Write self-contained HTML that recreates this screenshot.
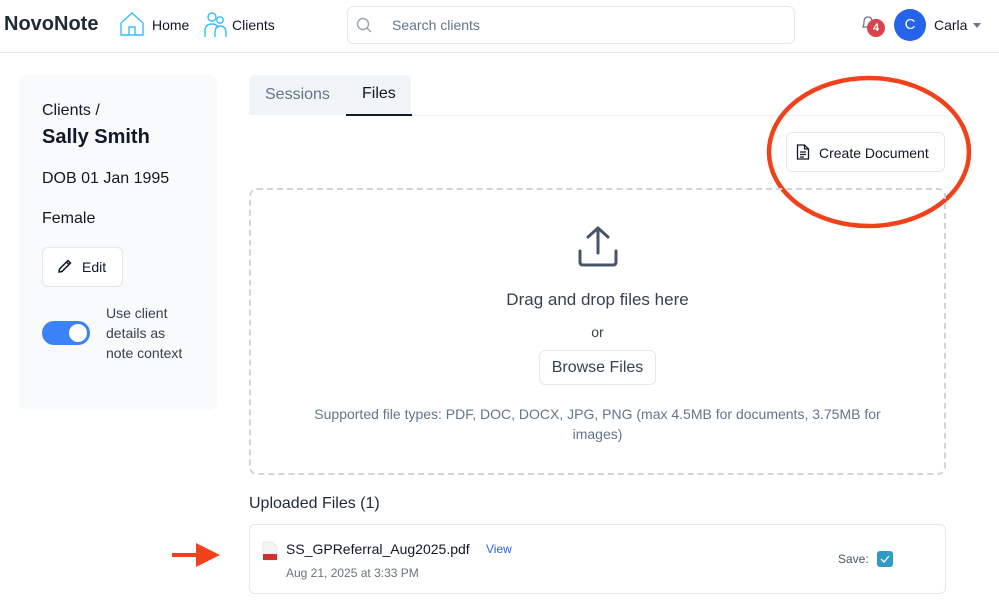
<!DOCTYPE html>
<html><head><style>
*{box-sizing:border-box;margin:0;padding:0}
body{width:999px;height:610px;background:#fff;font-family:"Liberation Sans",sans-serif;position:relative;overflow:hidden;color:#111827}
.a{position:absolute;white-space:nowrap}
</style></head><body>
<div class="a" style="left:4px;top:13px;font-size:20px;font-weight:bold;color:#1f2937">NovoNote</div>
<svg class="a" style="left:119px;top:11px" width="26" height="26" viewBox="0 0 26 26" fill="none" stroke="#38bdf8" stroke-width="1.4"><path d="M2 12 L13 2 L24 12 V24 H2 Z"/><path d="M10 24 V16 H16 V24"/></svg>
<div class="a" style="left:152px;top:17px;font-size:14px">Home</div>
<svg class="a" style="left:204px;top:12px" width="24" height="26" viewBox="0 0 24 26" fill="none" stroke="#38bdf8" stroke-width="1.4"><circle cx="8" cy="5" r="4"/><circle cx="16" cy="8" r="3.2"/><path d="M1 25 V19 Q1 12 8 12 Q13 12 14 16"/><path d="M11 25 V21 Q11 14 16 14 Q22 14 22 21 V25"/></svg>
<div class="a" style="left:232px;top:17px;font-size:14px">Clients</div>
<div class="a" style="left:347px;top:6px;width:448px;height:38px;border:1px solid #e5e7eb;border-radius:6px"></div>
<svg class="a" style="left:356px;top:17px" width="16" height="16" viewBox="0 0 16 16" fill="none" stroke="#9ca3af" stroke-width="1.4"><circle cx="7" cy="7" r="5.5"/><path d="M11 11 L15 15"/></svg>
<div class="a" style="left:392px;top:17px;font-size:14px;color:#64748b">Search clients</div>
<svg class="a" style="left:861px;top:15px" width="14" height="16" viewBox="0 0 14 16" fill="none" stroke="#6b7280" stroke-width="1.2"><path d="M2 12 Q3 10 3 7 Q3 2 7 2 Q11 2 11 7 Q11 10 12 12 Z"/></svg>
<div class="a" style="left:867px;top:19px;width:18px;height:18px;border-radius:50%;background:#d9434f;color:#fff;font-size:11px;font-weight:bold;text-align:center;line-height:18px">4</div>
<div class="a" style="left:894px;top:9px;width:32px;height:32px;border-radius:50%;background:#2563eb;color:#fff;font-size:15px;text-align:center;line-height:32px">C</div>
<div class="a" style="left:934px;top:17px;font-size:14px">Carla</div>
<div class="a" style="left:973px;top:23px;width:0;height:0;border-left:4px solid transparent;border-right:4px solid transparent;border-top:5px solid #6b7280"></div>
<div class="a" style="left:0;top:52px;width:999px;height:1px;background:#e5e7eb"></div>

<div class="a" style="left:18px;top:75px;width:199px;height:335px;background:#f8fafc;border-radius:8px"></div>
<div class="a" style="left:42px;top:102px;font-size:16px">Clients /</div>
<div class="a" style="left:42px;top:126px;font-size:20px;font-weight:bold">Sally Smith</div>
<div class="a" style="left:42px;top:170px;font-size:16px">DOB 01 Jan 1995</div>
<div class="a" style="left:42px;top:210px;font-size:16px">Female</div>
<div class="a" style="left:42px;top:247px;width:81px;height:40px;border:1px solid #e5e7eb;border-radius:6px;background:#fff"></div>
<svg class="a" style="left:57px;top:258px" width="16" height="16" viewBox="0 0 16 16" fill="none" stroke="#111827" stroke-width="1.5"><path d="M2 14 L2.5 11 L11 2.5 L13.5 5 L5 13.5 Z M9.5 4 L12 6.5"/></svg>
<div class="a" style="left:82px;top:259px;font-size:14px">Edit</div>
<div class="a" style="left:42px;top:321px;width:48px;height:24px;border-radius:12px;background:#3b82f6"></div>
<div class="a" style="left:69px;top:324px;width:18px;height:18px;border-radius:50%;background:#fff"></div>
<div class="a" style="left:106px;top:303px;font-size:14px;line-height:20px;color:#374151">Use client<br>details as<br>note context</div>

<div class="a" style="left:249px;top:75px;width:162px;height:40px;background:#f1f5f9;border-radius:6px 6px 0 0"></div>
<div class="a" style="left:265px;top:86px;font-size:16px;color:#64748b">Sessions</div>
<div class="a" style="left:362px;top:85px;font-size:16px">Files</div>
<div class="a" style="left:346px;top:114px;width:66px;height:2px;background:#111827"></div>
<div class="a" style="left:412px;top:115px;width:534px;height:1px;background:#eef0f3"></div>

<div class="a" style="left:786px;top:132px;width:159px;height:40px;border:1px solid #e5e7eb;border-radius:6px"></div>
<svg class="a" style="left:796px;top:144px" width="14" height="16" viewBox="0 0 14 16" fill="none" stroke="#111827" stroke-width="1.3"><path d="M1.5 1 H8.5 L12.5 5 V15 H1.5 Z M8.5 1 V5 H12.5 M4 8 H10 M4 10.5 H10 M4 13 H8"/></svg>
<div class="a" style="left:819px;top:145px;font-size:14px">Create Document</div>
<svg class="a" style="left:760px;top:70px" width="220" height="170"><ellipse cx="109" cy="82" rx="100" ry="74" fill="none" stroke="#f0421a" stroke-width="4.5"/></svg>

<div class="a" style="left:249px;top:188px;width:697px;height:287px;border:2px dashed #d1d5db;border-radius:8px"></div>
<svg class="a" style="left:576px;top:224px" width="44" height="44" viewBox="0 0 44 44" fill="none" stroke="#475569" stroke-width="3" stroke-linecap="round" stroke-linejoin="round"><path d="M22 29 V4 M12 13 L22 4 L32 13"/><path d="M4 27 V38 Q4 41 7 41 H37 Q40 41 40 38 V27"/></svg>
<div class="a" style="left:249px;top:290px;width:697px;text-align:center;font-size:17px;color:#374151">Drag and drop files here</div>
<div class="a" style="left:249px;top:324px;width:697px;text-align:center;font-size:14px;color:#374151">or</div>
<div class="a" style="left:539px;top:350px;width:117px;height:35px;border:1px solid #e5e7eb;border-radius:6px;text-align:center;line-height:33px;font-size:16px;color:#374151">Browse Files</div>
<div class="a" style="left:300px;top:404px;width:595px;text-align:center;white-space:normal;font-size:14px;line-height:20px;color:#64748b">Supported file types: PDF, DOC, DOCX, JPG, PNG (max 4.5MB for documents, 3.75MB for images)</div>

<div class="a" style="left:249px;top:495px;font-size:16px;color:#1f2937">Uploaded Files (1)</div>
<div class="a" style="left:249px;top:524px;width:697px;height:70px;border:1px solid #e5e7eb;border-radius:6px"></div>
<svg class="a" style="left:172px;top:543px" width="50" height="26"><path d="M0 10 H24 V0 L48 12 L24 24 V14 H0 Z" fill="#f0421a"/></svg>
<svg class="a" style="left:262px;top:541px" width="16" height="20" viewBox="0 0 16 20"><path d="M1 1 H10 L15 6 V19 H1 Z" fill="#f3f4f6" stroke="#e5e7eb"/><rect x="1" y="13" width="14" height="6" fill="#d32f2f"/></svg>
<div class="a" style="left:286px;top:541px;font-size:14px">SS_GPReferral_Aug2025.pdf</div>
<div class="a" style="left:486px;top:542px;font-size:12px;color:#2563eb">View</div>
<div class="a" style="left:286px;top:566px;font-size:12px;color:#6b7280">Aug 21, 2025 at 3:33 PM</div>
<div class="a" style="left:838px;top:552px;font-size:12px;color:#4b5563">Save:</div>
<div class="a" style="left:877px;top:551px;width:16px;height:16px;border-radius:3px;background:#2e9bc7"></div>
<svg class="a" style="left:877px;top:551px" width="16" height="16"><path d="M4 8 L7 11 L12 5" fill="none" stroke="#fff" stroke-width="1.3"/></svg>
</body></html>
